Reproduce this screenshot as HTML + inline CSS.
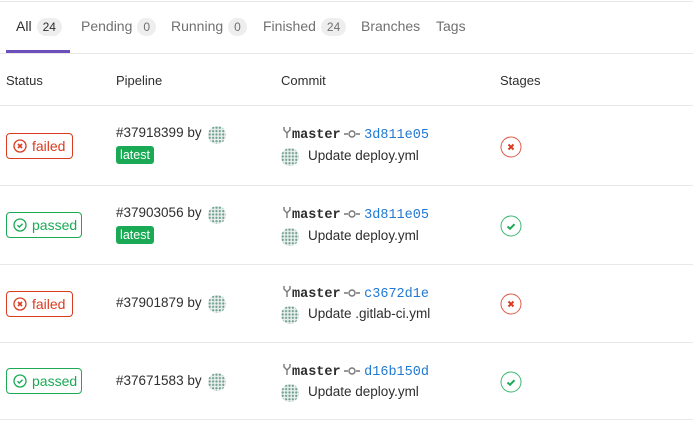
<!DOCTYPE html>
<html><head><meta charset="utf-8"><style>
*{margin:0;padding:0;box-sizing:border-box}
body{width:693px;height:425px;background:#fff;font-family:"Liberation Sans",sans-serif;font-size:13.5px;color:#2e2e2e;position:relative;overflow:hidden}
.a{position:absolute;white-space:nowrap}
.hl{position:absolute;left:0;width:693px;height:1px;background:#e8e8e8}
.tab{position:absolute;top:18px;color:#707070;font-size:14px}
.cnt{display:inline-block;background:#eee;border-radius:9px;padding:0 6px;font-size:12px;line-height:18px;color:#707070;margin-left:5px}
.hd{position:absolute;top:73px;font-size:13px;color:#2e2e2e}
.st{position:absolute;left:6px;height:26px;border:1px solid;border-radius:4px;font-size:14px;line-height:24px;padding-left:25px}
.st svg{position:absolute;left:6px;top:5px}
.f{color:#db3b21;border-color:#db3b21;width:67px}
.p{color:#1aaa55;border-color:#1aaa55;width:76px}
.lat{position:absolute;left:116px;width:38px;height:18px;background:#1aaa55;color:#fff;border-radius:3px;font-size:12.5px;line-height:18px;text-align:center}
.av{position:absolute;width:18px;height:18px;border-radius:50%;background:#e9efec radial-gradient(circle,#6e9e8e 0.9px,transparent 1.3px) 0 0/3.4px 3.4px}
.mono{font-family:"Liberation Mono",monospace;font-size:13.5px}
.br{font-weight:bold;color:#2e2e2e}
.sha{color:#1f78d1}
.sg{position:absolute;left:500px}
</style></head><body>
<div class="hl" style="top:1px"></div>
<div class="tab" style="left:16px;color:#2e2e2e">All<span class="cnt" style="color:#2e2e2e">24</span></div>
<div class="tab" style="left:81px">Pending<span class="cnt">0</span></div>
<div class="tab" style="left:171px">Running<span class="cnt">0</span></div>
<div class="tab" style="left:263px">Finished<span class="cnt">24</span></div>
<div class="tab" style="left:361px">Branches</div>
<div class="tab" style="left:436px">Tags</div>
<div class="a" style="left:6px;top:50px;width:64px;height:3px;background:#6b4fbb"></div>
<div class="hl" style="top:53px"></div>
<div class="hd" style="left:6px">Status</div>
<div class="hd" style="left:116px">Pipeline</div>
<div class="hd" style="left:281px">Commit</div>
<div class="hd" style="left:500px">Stages</div>
<div class="hl" style="top:105px"></div>
<div class="hl" style="top:185px"></div>
<div class="hl" style="top:264px"></div>
<div class="hl" style="top:342px"></div>
<div class="hl" style="top:419px"></div>

<div class="st f" style="top:133px"><svg width="14" height="14" viewBox="0 0 14 14"><circle cx="7" cy="7" r="6" fill="none" stroke="#db3b21" stroke-width="1.3"/><path d="M5 5l4 4M9 5l-4 4" stroke="#db3b21" stroke-width="1.6"/></svg>failed</div>
<div class="a" style="left:116px;top:125px">#37918399 by</div><div class="av" style="left:208px;top:126px"></div>
<div class="lat" style="top:146px">latest</div>
<div class="a" style="left:282px;top:126px"><svg width="10" height="13" viewBox="0 0 10 13" style="vertical-align:-1px"><path d="M2 1v3l3 3 3-3V1M5 7v5" fill="none" stroke="#777" stroke-width="1.4"/></svg><span class="mono br">master</span> <svg width="16" height="8" viewBox="0 0 16 8"><path d="M0 4h4M12 4h4" stroke="#777" stroke-width="1.4"/><circle cx="8" cy="4" r="3" fill="none" stroke="#777" stroke-width="1.4"/></svg> <span class="mono sha">3d811e05</span></div>
<div class="av" style="left:281px;top:148px"></div><div class="a" style="left:308px;top:148px">Update deploy.yml</div>
<svg class="sg" style="top:136px" width="22" height="22" viewBox="0 0 22 22"><circle cx="11" cy="11" r="10" fill="none" stroke="#e05a45" stroke-width="1"/><path d="M8.5 8.5l5 5M13.5 8.5l-5 5" stroke="#db3b21" stroke-width="2"/></svg>

<div class="st p" style="top:212px"><svg width="14" height="14" viewBox="0 0 14 14"><circle cx="7" cy="7" r="6" fill="none" stroke="#1aaa55" stroke-width="1.3"/><path d="M4.5 7.2l1.8 1.8 3.3-3.3" fill="none" stroke="#1aaa55" stroke-width="1.4"/></svg>passed</div>
<div class="a" style="left:116px;top:205px">#37903056 by</div><div class="av" style="left:208px;top:206px"></div>
<div class="lat" style="top:226px">latest</div>
<div class="a" style="left:282px;top:206px"><svg width="10" height="13" viewBox="0 0 10 13" style="vertical-align:-1px"><path d="M2 1v3l3 3 3-3V1M5 7v5" fill="none" stroke="#777" stroke-width="1.4"/></svg><span class="mono br">master</span> <svg width="16" height="8" viewBox="0 0 16 8"><path d="M0 4h4M12 4h4" stroke="#777" stroke-width="1.4"/><circle cx="8" cy="4" r="3" fill="none" stroke="#777" stroke-width="1.4"/></svg> <span class="mono sha">3d811e05</span></div>
<div class="av" style="left:281px;top:228px"></div><div class="a" style="left:308px;top:228px">Update deploy.yml</div>
<svg class="sg" style="top:215px" width="22" height="22" viewBox="0 0 22 22"><circle cx="11" cy="11" r="10" fill="none" stroke="#3cb870" stroke-width="1"/><path d="M7.5 11.5l2.5 2.2 4.5-4.5" fill="none" stroke="#1aaa55" stroke-width="2"/></svg>

<div class="st f" style="top:291px"><svg width="14" height="14" viewBox="0 0 14 14"><circle cx="7" cy="7" r="6" fill="none" stroke="#db3b21" stroke-width="1.3"/><path d="M5 5l4 4M9 5l-4 4" stroke="#db3b21" stroke-width="1.6"/></svg>failed</div>
<div class="a" style="left:116px;top:295px">#37901879 by</div><div class="av" style="left:208px;top:295px"></div>
<div class="a" style="left:282px;top:285px"><svg width="10" height="13" viewBox="0 0 10 13" style="vertical-align:-1px"><path d="M2 1v3l3 3 3-3V1M5 7v5" fill="none" stroke="#777" stroke-width="1.4"/></svg><span class="mono br">master</span> <svg width="16" height="8" viewBox="0 0 16 8"><path d="M0 4h4M12 4h4" stroke="#777" stroke-width="1.4"/><circle cx="8" cy="4" r="3" fill="none" stroke="#777" stroke-width="1.4"/></svg> <span class="mono sha">c3672d1e</span></div>
<div class="av" style="left:281px;top:306px"></div><div class="a" style="left:308px;top:306px">Update .gitlab-ci.yml</div>
<svg class="sg" style="top:293px" width="22" height="22" viewBox="0 0 22 22"><circle cx="11" cy="11" r="10" fill="none" stroke="#e05a45" stroke-width="1"/><path d="M8.5 8.5l5 5M13.5 8.5l-5 5" stroke="#db3b21" stroke-width="2"/></svg>

<div class="st p" style="top:368px"><svg width="14" height="14" viewBox="0 0 14 14"><circle cx="7" cy="7" r="6" fill="none" stroke="#1aaa55" stroke-width="1.3"/><path d="M4.5 7.2l1.8 1.8 3.3-3.3" fill="none" stroke="#1aaa55" stroke-width="1.4"/></svg>passed</div>
<div class="a" style="left:116px;top:373px">#37671583 by</div><div class="av" style="left:208px;top:373px"></div>
<div class="a" style="left:282px;top:363px"><svg width="10" height="13" viewBox="0 0 10 13" style="vertical-align:-1px"><path d="M2 1v3l3 3 3-3V1M5 7v5" fill="none" stroke="#777" stroke-width="1.4"/></svg><span class="mono br">master</span> <svg width="16" height="8" viewBox="0 0 16 8"><path d="M0 4h4M12 4h4" stroke="#777" stroke-width="1.4"/><circle cx="8" cy="4" r="3" fill="none" stroke="#777" stroke-width="1.4"/></svg> <span class="mono sha">d16b150d</span></div>
<div class="av" style="left:281px;top:384px"></div><div class="a" style="left:308px;top:384px">Update deploy.yml</div>
<svg class="sg" style="top:371px" width="22" height="22" viewBox="0 0 22 22"><circle cx="11" cy="11" r="10" fill="none" stroke="#3cb870" stroke-width="1"/><path d="M7.5 11.5l2.5 2.2 4.5-4.5" fill="none" stroke="#1aaa55" stroke-width="2"/></svg>
</body></html>
